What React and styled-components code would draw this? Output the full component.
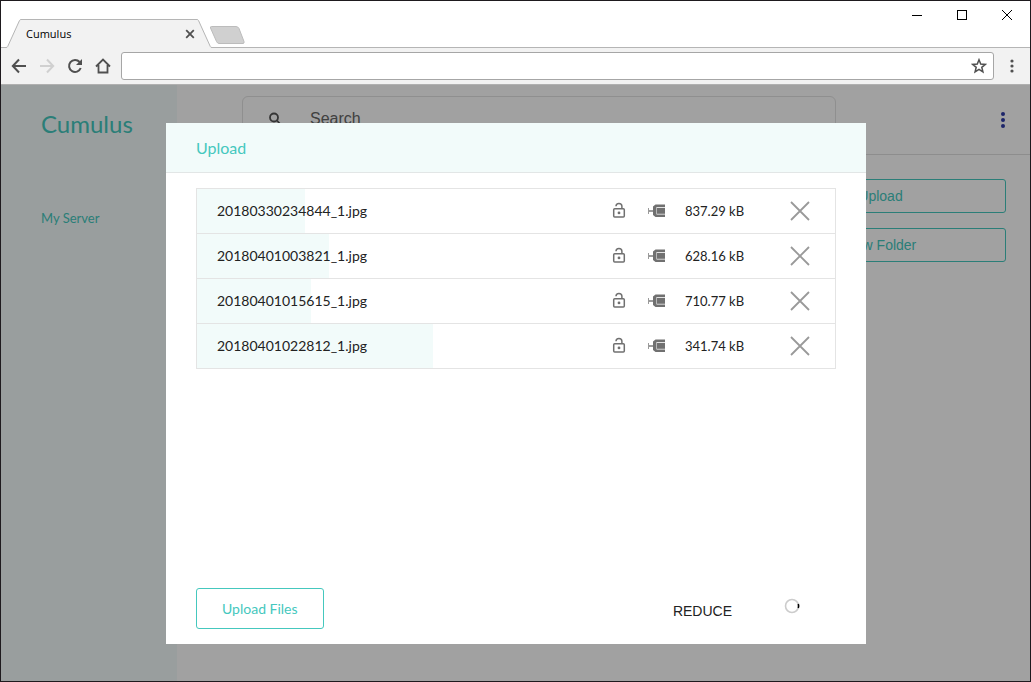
import React from "react";
import styled, { createGlobalStyle } from "styled-components";

const GlobalStyle = createGlobalStyle`
  *, *::before, *::after { box-sizing: border-box; }
  body { margin: 0; background: #fff; }
  button, input { font: inherit; margin: 0; }
`;

const lato = `Lato, "Open Sans", sans-serif`;
const arial = `"Liberation Sans", Arial, sans-serif`;

const Window = styled.div`
  display: flex;
  flex-direction: column;
  height: 100vh;
  min-height: 480px;
  border: 1px solid #1e1a1e;
  background: #fff;
  font-family: ${lato};
  color: #222;
`;

const TabStrip = styled.header`
  position: relative;
  display: flex;
  align-items: flex-end;
  height: 47px;
  border-bottom: 1px solid #b5b5b5;
`;

const Tab = styled.div`
  position: relative;
  display: flex;
  align-items: center;
  justify-content: space-between;
  width: 206px;
  height: 29px;
  margin: 0 0 -1px 5px;
  padding: 0 17px 0 20px;
  color: #000;
`;

const TabShape = styled.svg`
  position: absolute;
  inset: 0;
`;

const TabTitle = styled.span`
  position: relative;
  font: 11px/16px "Open Sans", "Noto Sans", sans-serif;
`;

const IconButton = styled.button`
  position: relative;
  display: flex;
  align-items: center;
  justify-content: center;
  flex: none;
  width: ${(p) => p.$width || 28}px;
  height: ${(p) => p.$height || 28}px;
  padding: 0;
  border: 0;
  background: none;
  color: ${(p) => p.$color || "#505050"};
`;

const NewTab = styled(IconButton)`
  margin: 0 0 2px -4px;
`;

const WindowControls = styled.div`
  display: flex;
  align-self: flex-start;
  margin-left: auto;
`;

const Toolbar = styled.nav`
  display: flex;
  align-items: center;
  height: 37px;
  padding-left: 4px;
  background: #f2f2f2;
  border-bottom: 1px solid #b0b0b0;
`;

const Address = styled.div`
  display: flex;
  flex: 1;
  height: 28px;
  margin-left: 4px;
  border: 1px solid #a6a6a6;
  border-radius: 3px;
  background: #fff;
`;

const AddressInput = styled.input`
  flex: 1;
  min-width: 0;
  padding: 0 8px;
  border: 0;
  background: none;
  outline: 0;
`;

const Page = styled.div`
  position: relative;
  display: flex;
  flex: 1;
  min-height: 0;
`;

const Sidebar = styled.aside`
  flex: none;
  width: 176px;
  padding: 24px 40px;
  background: #f2fbfa;
  color: #45c8be;
`;

const Brand = styled.h1`
  margin: 0 0 68px;
  font-size: 24px;
  font-weight: 400;
  line-height: 30px;
`;

const SideLink = styled.a`
  font-size: 13px;
  line-height: 20px;
  color: inherit;
  text-decoration: none;
  white-space: nowrap;
`;

const Content = styled.main`
  flex: 1;
  min-width: 0;
`;

const TopBar = styled.div`
  display: flex;
  align-items: center;
  justify-content: space-between;
  height: 70px;
  padding: 0 13px 0 65px;
  border-bottom: 1px solid #e0e0e0;
`;

const SearchBox = styled.label`
  display: flex;
  align-items: center;
  flex: 0 1 594px;
  height: 46px;
  margin-bottom: 2px;
  padding: 0 25px;
  border: 1px solid #e2e2e2;
  border-radius: 6px;
  color: #555;
`;

const SearchInput = styled.input`
  flex: 1;
  min-width: 0;
  margin-left: 28px;
  padding: 0;
  border: 0;
  outline: 0;
  background: none;
  font: 16px/20px ${arial};
  &::placeholder { color: #666; opacity: 1; }
`;

const Actions = styled.div`
  display: flex;
  flex-direction: column;
  gap: 15px;
  width: 251px;
  margin: 24px 24px 0 auto;
`;

const OutlineButton = styled.button`
  height: ${(p) => p.$height}px;
  padding: 0 ${(p) => p.$pad || 0}px;
  border: 1px solid #45c8be;
  border-radius: 3px;
  background: transparent;
  color: #45c8be;
  font: ${(p) => (p.$face === "arial" ? `14px/16px ${arial}` : `14px/16px ${lato}`)};
`;

const Overlay = styled.div`
  position: absolute;
  inset: 0;
  display: flex;
  align-items: center;
  justify-content: center;
  padding: 38px 16px 37px 17px;
  background: rgba(0, 0, 0, 0.37);
`;

const Dialog = styled.section`
  display: flex;
  flex-direction: column;
  width: 100%;
  max-width: 700px;
  height: 100%;
  background: #fff;
`;

const DialogTitle = styled.h2`
  margin: 0;
  padding: 15px 30px 14px;
  border-bottom: 1px solid #e2e6e6;
  background: #f2fbfa;
  color: #45c8be;
  font-size: 16px;
  font-weight: 400;
  line-height: 20px;
`;

const FileList = styled.ul`
  flex: 1;
  min-height: 0;
  margin: 15px 30px 0;
  padding: 0;
  list-style: none;
`;

const FileRow = styled.li`
  position: relative;
  display: flex;
  align-items: center;
  height: 46px;
  margin-bottom: -1px;
  padding: 0 19px 0 20px;
  border: 1px solid #e4e4e4;
  color: #222;
  font-size: 14px;
  line-height: 20px;
`;

const Progress = styled.div`
  position: absolute;
  inset: 0 auto 0 0;
  background: #f2fbfa;
`;

const FileName = styled.span`
  position: relative;
  flex: 1;
`;

const FileSize = styled.span`
  width: 99px;
  margin-left: 9px;
  font-size: 13px;
`;

const Footer = styled.footer`
  display: flex;
  align-items: center;
  justify-content: space-between;
  padding: 0 66px 15px 30px;
`;

const Reduce = styled.div`
  display: flex;
  align-items: flex-start;
  gap: 52px;
`;

const ReduceButton = styled.button`
  padding: 4px 0 0;
  border: 0;
  background: none;
  color: #222;
  font: 14px/18px ${arial};
`;

const files = [
  { name: "20180330234844_1.jpg", size: "837.29 kB", progress: 17 },
  { name: "20180401003821_1.jpg", size: "628.16 kB", progress: 20.7 },
  { name: "20180401015615_1.jpg", size: "710.77 kB", progress: 17.9 },
  { name: "20180401022812_1.jpg", size: "341.74 kB", progress: 37 },
];

const Svg = ({ w = 16, h = 16, children, ...rest }) => (
  <svg width={w} height={h} viewBox={`0 0 ${w} ${h}`} fill="none" stroke="currentColor" aria-hidden="true" {...rest}>
    {children}
  </svg>
);

const Dots = ({ r, gap }) => (
  <Svg stroke="none" fill="currentColor">
    <circle cx="8" cy={8 - gap} r={r} />
    <circle cx="8" cy="8" r={r} />
    <circle cx="8" cy={8 + gap} r={r} />
  </Svg>
);

const LockIcon = () => (
  <Svg w={14} h={18} strokeWidth="1.5">
    <rect x="1.700" y="6.700" width="10.600" height="8.300" rx="1" />
    <path d="M4 4.300C4 .4 9.900.4 9.900 4.300V6.500" />
    <circle cx="7" cy="10.900" r="1.400" fill="currentColor" stroke="none" />
  </Svg>
);

const ClampIcon = () => (
  <Svg w={18} h={14} fill="currentColor" stroke="none">
    <path d="M0 4h1v2h4v2H1v2H0z" opacity=".7" />
    <path d="M7.500 .5H17v2.500H8.500v7.500H17V13H7.500L5 11V2.500z" />
    <path d="M9 3.800H17v6H9z" />
  </Svg>
);

export default function App() {
  return (
    <>
      <GlobalStyle />
      <Window>
        <TabStrip>
          <Tab>
            <TabShape width="206" height="29" viewBox="0 0 206 29" aria-hidden="true">
              <path d="M0 29 L1.500 28 L13.500 1.500 Q14 .5 15 .5 H191 Q192 .5 192.500 1.500 L204.500 28 L206 29Z" fill="#f2f2f2" />
              <path d="M0 28.500 Q1.200 28.500 1.700 27.500 L13.500 1.500 Q14 .5 15 .5 H191 Q192 .5 192.500 1.500 L204.300 27.500 Q204.800 28.500 206 28.500" fill="none" stroke="#b5b5b5" />
            </TabShape>
            <TabTitle>Cumulus</TabTitle>
            <IconButton $width={10} $height={16} aria-label="Close tab">
              <Svg w={10} h={10} strokeWidth="1.800"><path d="M1.200 1.200l7.600 7.600M8.800 1.200L1.200 8.800" /></Svg>
            </IconButton>
          </Tab>
          <NewTab $width={38} $height={20} aria-label="New tab">
            <Svg w={38} h={20} stroke="#bcbcbc">
              <path d="M3.500 1.500H28Q30 1.500 31 3.500L36 16.500Q36.500 18.500 35 18.500H11Q9.500 18.500 8.500 16.500L2.500 3Q2 1.500 3.500 1.500Z" fill="#d0d0d0" />
            </Svg>
          </NewTab>
          <WindowControls>
            <IconButton $width={45} $color="#000" aria-label="Minimize">
              <Svg w={10} h={10}><path d="M0 5.500H10" /></Svg>
            </IconButton>
            <IconButton $width={45} $color="#000" aria-label="Maximize">
              <Svg w={10} h={10}><rect x=".5" y=".5" width="9" height="9" /></Svg>
            </IconButton>
            <IconButton $width={46} $color="#000" aria-label="Close">
              <Svg w={10} h={10}><path d="M0 0l10 10M10 0L0 10" /></Svg>
            </IconButton>
          </WindowControls>
        </TabStrip>

        <Toolbar aria-label="Browser">
          <IconButton aria-label="Back">
            <Svg strokeWidth="2"><path d="M15 8H2M8 1.500L1.800 8L8 14.500" /></Svg>
          </IconButton>
          <IconButton $color="#d0d0d0" aria-label="Forward">
            <Svg strokeWidth="2"><path d="M1 8H14M8 1.500L14.200 8L8 14.500" /></Svg>
          </IconButton>
          <IconButton aria-label="Reload">
            <Svg strokeWidth="2">
              <path d="M12.600 4A6 6 0 1 0 13.700 10" />
              <path d="M15 1V7H9z" fill="currentColor" stroke="none" />
            </Svg>
          </IconButton>
          <IconButton aria-label="Home">
            <Svg strokeWidth="1.800"><path d="M1 8.500L8 1.500L15 8.500M3.500 7V14.500H12.500V7" /></Svg>
          </IconButton>
          <Address>
            <AddressInput aria-label="Address" />
            <IconButton $height={26} aria-label="Bookmark">
              <Svg strokeWidth="1.500">
                <path d="M8 1.800L9.700 6.100L14.300 6.400L10.800 9.300L11.900 13.800L8 11.300L4.100 13.800L5.200 9.300L1.700 6.400L6.300 6.100Z" />
              </Svg>
            </IconButton>
          </Address>
          <IconButton $width={36} aria-label="Browser menu">
            <Dots r={1.6} gap={5} />
          </IconButton>
        </Toolbar>

        <Page>
          <Sidebar>
            <Brand>Cumulus</Brand>
            <SideLink href="#server">My Server</SideLink>
          </Sidebar>
          <Content>
            <TopBar>
              <SearchBox>
                <Svg w={14} h={14} strokeWidth="1.800">
                  <circle cx="6" cy="5.500" r="4" />
                  <path d="M9 8.500L13 13" />
                </Svg>
                <SearchInput type="search" placeholder="Search" aria-label="Search" />
              </SearchBox>
              <IconButton $color="#2f3ca8" aria-label="Menu">
                <Dots r={2} gap={6} />
              </IconButton>
            </TopBar>
            <Actions>
              <OutlineButton $height={34} $face="arial">Upload</OutlineButton>
              <OutlineButton $height={34} $face="arial">New Folder</OutlineButton>
            </Actions>
          </Content>

          <Overlay>
            <Dialog role="dialog" aria-modal="true" aria-labelledby="upload-title">
              <DialogTitle id="upload-title">Upload</DialogTitle>
              <FileList>
                {files.map((f) => (
                  <FileRow key={f.name}>
                    <Progress style={{ width: `${f.progress}%` }} />
                    <FileName>{f.name}</FileName>
                    <IconButton $width={38} $color="#707070" aria-label={`Unlock ${f.name}`}><LockIcon /></IconButton>
                    <IconButton $width={38} $color="#707070" aria-label={`Compress ${f.name}`}><ClampIcon /></IconButton>
                    <FileSize>{f.size}</FileSize>
                    <IconButton $width={32} $color="#999" aria-label={`Remove ${f.name}`}>
                      <Svg w={20} h={20} strokeWidth="1.800"><path d="M1 1L19 19M19 1L1 19" /></Svg>
                    </IconButton>
                  </FileRow>
                ))}
              </FileList>
              <Footer>
                <OutlineButton $height={41} $pad={25}>Upload Files</OutlineButton>
                <Reduce>
                  <ReduceButton>REDUCE</ReduceButton>
                  <Svg strokeWidth="1.600">
                    <circle cx="8" cy="8" r="6.500" stroke="#ccc" />
                    <path d="M14.300 6A6.500 6.500 0 0 1 14.300 10" stroke="#000" />
                  </Svg>
                </Reduce>
              </Footer>
            </Dialog>
          </Overlay>
        </Page>
      </Window>
    </>
  );
}
